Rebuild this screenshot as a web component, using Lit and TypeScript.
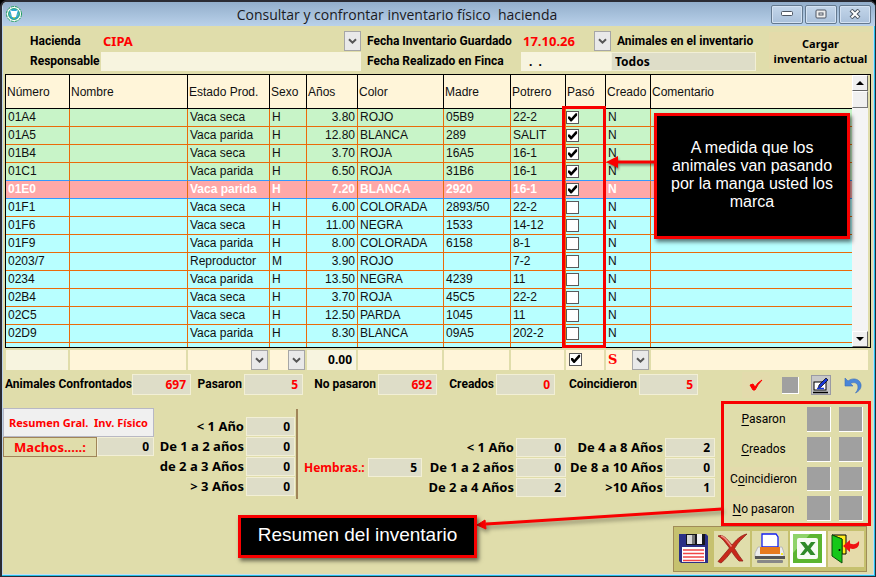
import { LitElement, html, css, svg, nothing } from "lit";
import { customElement, state } from "lit/decorators.js";
import { classMap } from "lit/directives/class-map.js";

interface Animal {
  numero: string;
  estado: string;
  sexo: string;
  anos: string;
  color: string;
  madre: string;
  potrero: string;
  paso: boolean;
}

const animal = (
  numero: string, estado: string, sexo: string, anos: string,
  color: string, madre: string, potrero: string, paso = false,
): Animal => ({ numero, estado, sexo, anos, color, madre, potrero, paso });

const ANIMALS: Animal[] = [
  animal("01A4", "Vaca seca", "H", "3.80", "ROJO", "05B9", "22-2", true),
  animal("01A5", "Vaca parida", "H", "12.80", "BLANCA", "289", "SALIT", true),
  animal("01B4", "Vaca seca", "H", "3.70", "ROJA", "16A5", "16-1", true),
  animal("01C1", "Vaca parida", "H", "6.50", "ROJA", "31B6", "16-1", true),
  animal("01E0", "Vaca parida", "H", "7.20", "BLANCA", "2920", "16-1", true),
  animal("01F1", "Vaca seca", "H", "6.00", "COLORADA", "2893/50", "22-2"),
  animal("01F6", "Vaca seca", "H", "11.00", "NEGRA", "1533", "14-12"),
  animal("01F9", "Vaca parida", "H", "8.00", "COLORADA", "6158", "8-1"),
  animal("0203/7", "Reproductor", "M", "3.90", "ROJO", "", "7-2"),
  animal("0234", "Vaca parida", "H", "13.50", "NEGRA", "4239", "11"),
  animal("02B4", "Vaca seca", "H", "3.70", "ROJA", "45C5", "22-2"),
  animal("02C5", "Vaca seca", "H", "12.50", "PARDA", "1045", "11"),
  animal("02D9", "Vaca parida", "H", "8.30", "BLANCA", "09A5", "202-2"),
];

const COLUMNS = ["Número", "Nombre", "Estado Prod.", "Sexo", "Años", "Color", "Madre", "Potrero", "Pasó", "Creado", "Comentario"];

const TOTALS: [string, string][] = [
  ["Animales Confrontados", "697"],
  ["Pasaron", "5"],
  ["No pasaron", "692"],
  ["Creados", "0"],
  ["Coincidieron", "5"],
];

const MALES: [string, string][] = [["< 1 Año", "0"], ["De 1 a 2 años", "0"], ["de 2 a 3 Años", "0"], ["> 3 Años", "0"]];
const FEMALES: [string, string][] = [["< 1 Año", "0"], ["De 1 a 2 años", "0"], ["De 2 a 4 Años", "2"]];
const FEMALES_OLD: [string, string][] = [["De 4 a 8 Años", "2"], ["De 8 a 10 Años", "0"], [">10 Años", "1"]];

/* text before the access key, the key, text after it */
const REPORTS: [string, string, string][] = [["", "P", "asaron"], ["", "C", "reados"], ["C", "o", "incidieron"], ["", "N", "o pasaron"]];

const controls = css`
  * { box-sizing: border-box; }
  button, input, select { font: inherit; color: inherit; margin: 0; padding: 0; border: 0; border-radius: 0; background: none; }
  button { cursor: pointer; }
  .tick {
    appearance: none; display: block; width: 13px; height: 13px;
    background: #fff; border: 1px solid #5a5a5a;
  }
  .tick::before { content: ""; display: block; width: 11px; height: 11px; }
  .tick:checked::before {
    background: #000;
    clip-path: polygon(9% 40%, 27% 40%, 38% 56%, 78% 12%, 92% 12%, 92% 32%, 42% 86%, 32% 86%, 9% 60%);
  }
`;

@customElement("combo-box")
export class ComboBox extends LitElement {
  static properties = { value: {}, label: {} };
  declare value: string;
  declare label: string;

  static styles = [controls, css`
    :host { display: grid; min-width: 0; }
    select, svg { grid-area: 1 / 1; }
    select { appearance: none; width: 100%; padding-left: 2px; outline: none; }
    svg { justify-self: end; width: 17px; height: 20px; pointer-events: none; }
  `];

  render() {
    return html`
      <select aria-label=${this.label}><option>${this.value ?? ""}</option></select>
      <svg viewBox="0 0 17 20" aria-hidden="true">
        <rect x=".5" y=".5" width="16" height="19" fill="#e9e9e9" stroke="#a6a6a6" />
        <path d="M5 8.2 8.5 11.7 12 8.2" fill="none" stroke="#555" stroke-width="2" />
      </svg>`;
  }
}

@customElement("animal-table")
export class AnimalTable extends LitElement {
  @state() private rows = ANIMALS;
  @state() private current = 4;

  static styles = [controls, css`
    :host { display: block; position: relative; font: 12px "Liberation Sans", sans-serif; color: #101010; }
    .frame { display: flex; border: 1px solid #000; background: #e0ddab; }
    .body { flex: 1; min-width: 0; background: #b8ffff; }
    table { width: 100%; table-layout: fixed; border-collapse: separate; border-spacing: 0; }
    .c-numero { width: 64px; } .c-nombre { width: 118px; } .c-estado { width: 82px; } .c-sexo { width: 37px; }
    .c-anos { width: 51px; } .c-color { width: 86px; } .c-madre { width: 67px; } .c-potrero { width: 55px; }
    .c-paso { width: 40px; } .c-creado { width: 45px; }
    th {
      height: 34px; padding: 0 1px; text-align: left; font-weight: 400; white-space: nowrap;
      background: #fff5d9; border-right: 1px solid #000; border-bottom: 1px solid #000;
    }
    tr { --line: #ea6a0a; }
    td {
      height: 18px; padding: 0 2px; line-height: 17px; white-space: nowrap;
      border-right: 1px solid #ea6a0a; border-bottom: 1px solid var(--line);
    }
    th:last-child, td:last-child { border-right: 0; }
    .done { background: #c8f4c8; }
    .before { --line: #3399ff; }
    .current { --line: #3399ff; background: #ffa8a8; color: #fff; font-weight: 700; }
    .num { text-align: right; }
    .check { padding: 0; }
    .rest td { height: 4px; border-bottom: 0; padding: 0; line-height: 0; }
    .scroll {
      width: 18px; padding-right: 2px; display: flex; flex-direction: column;
      background-clip: content-box; background-color: #f4f4f4;
    }
    .scroll button {
      height: 16px; background: #f0f0f0; border: 1px solid #fff; border-right-color: #666; border-bottom-color: #666;
      display: grid; place-items: center;
    }
    .thumb { height: 17px; background: #f0f0f0; border: 1px solid #fff; border-right-color: #777; border-bottom-color: #777; }
    .track { flex: 1; }
    .mark { position: absolute; left: 557px; top: 32px; width: 44px; bottom: 0; border: 3px solid #f80000; pointer-events: none; }
    .note {
      position: absolute; left: 649px; top: 39px; width: 196px; height: 126px; border: 3px solid #f80000; background: #000;
      color: #fff; font-size: 16px; line-height: 18px; text-align: center;
      display: grid; place-items: center; padding: 0 8px 3px; box-shadow: 2px 3px 4px #0008;
    }
    .note p { margin: 0; }
    .arrow { position: absolute; left: 601px; top: 80px; width: 50px; height: 16px; filter: drop-shadow(1px 2px 1px #0006); }
  `];

  private toggle(index: number) {
    this.current = index;
    this.rows = this.rows.map((r, i) => (i === index ? { ...r, paso: !r.paso } : r));
  }

  render() {
    return html`
      <div class="frame">
        <div class="body">
          <table>
            <colgroup>
              <col class="c-numero" /><col class="c-nombre" /><col class="c-estado" /><col class="c-sexo" />
              <col class="c-anos" /><col class="c-color" /><col class="c-madre" /><col class="c-potrero" />
              <col class="c-paso" /><col class="c-creado" /><col />
            </colgroup>
            <thead><tr>${COLUMNS.map((c) => html`<th scope="col">${c}</th>`)}</tr></thead>
            <tbody>
              ${this.rows.map((r, i) => html`
                <tr class=${classMap({ done: r.paso, current: i === this.current, before: i === this.current - 1 })}>
                  <td>${r.numero}</td><td></td><td>${r.estado}</td><td>${r.sexo}</td>
                  <td class="num">${r.anos}</td><td>${r.color}</td><td>${r.madre}</td><td>${r.potrero}</td>
                  <td class="check">
                    <input class="tick" type="checkbox" aria-label="Pasó ${r.numero}" .checked=${r.paso} @change=${() => this.toggle(i)} />
                  </td>
                  <td>N</td><td></td>
                </tr>`)}
              <tr class="rest" aria-hidden="true">${COLUMNS.map(() => html`<td></td>`)}</tr>
            </tbody>
          </table>
        </div>
        <div class="scroll">
          <button aria-label="Subir"><svg width="8" height="4" viewBox="0 0 8 4"><path d="M0 4 4 0 8 4z" /></svg></button>
          <div class="thumb"></div>
          <div class="track"></div>
          <button aria-label="Bajar"><svg width="8" height="4" viewBox="0 0 8 4"><path d="M0 0 4 4 8 0z" /></svg></button>
        </div>
      </div>
      <div class="mark"></div>
      <svg class="arrow" viewBox="0 0 50 16" aria-hidden="true"><path d="M0 8 12 2V6.500H50V9.500H12V14z" fill="#f80000" /></svg>
      <div class="note"><p>A medida que los animales van pasando por la manga usted los marca</p></div>`;
  }
}

const saveIcon = svg`
  <path d="M1 1H28L30 3V30H3L1 28z" fill="#2b2f86" />
  <rect x="8" y="1" width="19" height="11" fill="#16161c" /><rect x="9" y="2" width="5" height="9" fill="#d8d8d8" />
  <rect x="14" y="2" width="3" height="9" fill="#777" />
  <rect x="19" y="1" width="5" height="10" fill="#f2f2f2" /><rect x="4" y="14" width="23" height="15" fill="#fff" />
  <path d="M5 17H26M5 20.500H26M5 24H26M5 27.500H26" stroke="#f04545" stroke-width="1.300" />`;
const deleteIcon = svg`
  <path d="M2 3C7 1 10 5 16 12C20 7 25 2 31 1C27 5 22 9 18.500 15.500C21 20 24 24 27 28L23 28C20 25 18 22 15.500 18.500C12 23 9 27 5 30L2 28.500C6 24 10 19 13.500 15C9 9 6 5 2 3z" fill="#c8281c" stroke="#8e2219" stroke-width=".8" />
  <path d="M5 3C9 4 12 9 15.500 13.500" fill="none" stroke="#ee8d80" stroke-width="1.500" />`;
const printIcon = svg`
  <path d="M4 14H28L30 20V25H1V20z" fill="#ececec" stroke="#b9b9b9" />
  <path d="M8 1H22L24 4V14H8z" fill="#fff" stroke="#1420f0" stroke-width="1.300" />
  <rect x="6" y="14" width="20" height="7" fill="#e87a1c" />
  <rect x="1" y="23" width="30" height="3" fill="#555" /><rect x="3" y="27" width="26" height="3" rx="1" fill="#888" />
  <rect x="27" y="20" width="2" height="2" fill="#f6ee28" />`;
const excelIcon = svg`
  <rect x="1" y="1" width="29" height="29" fill="#5cb531" /><path d="M1 1H18L1 20z" fill="#8fd36a" />
  <rect x="5" y="5" width="21" height="21" rx="2" fill="#f6fbf4" />
  <path d="M8 9H13L16 13 19 9H23.500L18.500 15.500 23.500 22H18.500L15.500 18 12 22H8L13 15.500z" fill="#2f8a2a" />`;
const exitIcon = svg`
  <path d="M2 2H16V21H12V6z" fill="#ffee1c" stroke="#000" />
  <path d="M2 2 12 6V30L2 23z" fill="#16c818" stroke="#0a4f0a" /><circle cx="9.500" cy="17" r="1" fill="#000" />
  <path d="M13 13 20 7V10.500C24 12 27 11 29 8C30 14 26 17 20 15.500V19z" fill="#f01212" />`;

const ACTIONS: [string, string, unknown][] = [
  ["Guardar", "save", saveIcon], ["Eliminar", "delete", deleteIcon], ["Imprimir", "print", printIcon],
  ["Excel", "excel", excelIcon], ["Salir", "exit", exitIcon],
];

@customElement("app-root")
export class AppRoot extends LitElement {
  static styles = [controls, css`
    :host { display: block; font: 700 12px "Roboto", sans-serif; color: #000; background: #000; }
    .window {
      min-height: 100vh; display: flex; flex-direction: column; background: #e0ddab;
      border: solid #2b2b33; border-width: 2px 1px 1px 2px; border-radius: 7px 7px 0 0;
      box-shadow: inset -1px -1px #22c2e8, inset -2px -2px #c6dcf0, inset 1px 0 #bcd2ea; padding: 0 3px 3px 1px; overflow: hidden;
    }
    .title {
      margin-right: -3px; height: 24px; display: grid; grid-template-columns: auto 1fr auto; align-items: center;
      background: linear-gradient(#93aecb, #b9d1ea); padding: 0 4px 0 2px;
    }
    .title h1 { margin: 0; text-align: center; font: 400 14px "Open Sans", sans-serif; white-space: pre; color: #1a1a22; }
    .system { justify-self: end; display: flex; gap: 2px; }
    .system button {
      width: 32px; height: 19px; border: 1px solid #64798f; border-radius: 2px; background: linear-gradient(#c4d6ea, #a9c0da);
      display: grid; place-items: center; box-shadow: inset 0 0 0 1px #d4e2f2;
    }
    .head {
      display: grid; grid-template-columns: 98px minmax(180px, 1fr) 160px 90px 145px 13px 103px; grid-template-rows: 21px 20px;
      align-items: center; padding: 4px 0 3px;
    }
    .head label { white-space: nowrap; }
    .caption { padding-left: 27px; }
    .caption2 { padding-left: 6px; }
    combo-box { color: #f00; font: 700 13px "Noto Sans", sans-serif; }
    .field { width: 100%; height: 19px; background: #f7f4df; padding: 0 8px; font: 700 12px "Noto Sans", sans-serif; }
    .readonly { background: #deddc8; border: 1px solid #f2efd6; }
    .todos { padding: 0 3px; }
    .load { grid-area: 1 / 7 / 3 / 8; height: 37px; background: #e5dbaa; font: 700 11px/15px "Noto Sans", sans-serif; white-space: nowrap; }
    animal-table { margin: 0 1px 0 2px; }
    .filters {
      display: grid; grid-template-columns: 64px 118px 82px 37px 51px 86px 67px 55px 40px 45px 1fr;
      margin: 1px 2px 0 3px; height: 21px; align-items: center;
    }
    .filters > * { margin-right: 2px; min-width: 0; }
    .filters .text { width: auto; height: 20px; background: #fff5d9; text-align: right; padding: 0 4px; font: 700 12px "Noto Sans", sans-serif; }
    .filters .pale { background: #f7f4df; }
    .filters combo-box, .flag { background: #fff5d9; }
    .filters combo-box { font-family: "DejaVu Serif", serif; }
    .flag { height: 20px; padding: 3px; }
    .totals { display: flex; align-items: center; height: 30px; padding-left: 2px; }
    .counts { display: grid; grid-template-columns: 127px 59px 53px 59px 75px 59px 59px 59px 84px 59px; align-items: center; padding-bottom: 2px; }
    .counts label { text-align: right; white-space: nowrap; padding-right: 2px; }
    .counts input { height: 21px; color: #f00; }
    input.value { text-align: right; padding: 0 4px; font: 700 12px "Noto Sans", sans-serif; width: 100%; }
    .tools { margin-left: auto; display: flex; align-items: center; gap: 12px; padding-right: 9px; }
    .tools button { display: grid; place-items: center; width: 20px; height: 20px; }
    .tools .confirm { width: 28px; height: 26px; background: #e3dbac; }
    .tools .edit { background: #c8c8c8; border: 1px solid #9a9aa4; }
    .swatch { background: #a0a0a0; border: solid #fff; border-width: 0 1px 1px 0; }
    .tools .swatch { width: 17px; height: 17px; }
    .lower { display: flex; align-items: flex-start; padding-top: 1px; }
    .summary { flex: 1; display: flex; align-items: flex-start; font: 700 13px "Noto Sans", sans-serif; }
    .males { width: 151px; padding-top: 7px; color: #f00; }
    .males button { width: 100%; height: 29px; background: #f0f0f0; border: 1px solid #b8b8c4; font-size: 11px; white-space: pre; }
    .males .line { display: flex; height: 20px; }
    .males label { width: 94px; border: 1px solid #a08458; text-align: center; line-height: 18px; }
    .males input { flex: 1; min-width: 0; color: #000; height: 19px; }
    .ages { display: grid; align-items: center; row-gap: 1px; }
    .ages label { text-align: right; white-space: nowrap; padding-right: 2px; line-height: 19px; }
    .ages.male { grid-template-columns: 92px 49px; margin-top: 16px; }
    .rule { width: 2px; height: 90px; margin: 8px 6px 0 1px; background: #a08458; }
    .hembras { display: grid; grid-template-columns: 64px 54px; align-items: center; margin-top: 57px; color: #f00; }
    .hembras label { font-size: 12px; }
    .hembras input { color: #000; }
    .ages.female { grid-template-columns: 94px 50px; margin-top: 37px; }
    .ages.old { grid-template-columns: 99px 50px; margin-top: 37px; }
    .side { width: 150px; position: relative; margin-right: 1px; }
    .reports {
      border: 3px solid #f80000; height: 125px; padding: 3px 5px 2px 4px;
      display: grid; grid-template-columns: 1fr 24px 24px; column-gap: 8px; row-gap: 5px;
    }
    .reports button { font: 400 12px "Roboto", sans-serif; white-space: nowrap; }
    .reports .named { background: #e3dbac; }
    .plain { background: none; }
    u { text-underline-offset: 2px; }
    .actions {
      position: relative; width: 194px; height: 46px; margin-left: -48px; display: flex; gap: 2px; padding: 4px 2px;
      background: #c6c16f; border: 1px solid #a08c58;
    }
    .actions button { width: 36px; height: 36px; background: #e0ddab; display: grid; place-items: center; }
    .actions .save { background: none; }
    .actions .excel { background: #fff; }
    .actions .exit { background: #e5dbaa; }
    .note {
      position: absolute; right: 394px; top: 114px; width: 239px; height: 43px;
      background: #000; border: 3px solid #f80000; color: #fff; display: grid; place-items: center;
      font: 400 19px "Liberation Sans", sans-serif; box-shadow: 2px 3px 4px #0008; padding-bottom: 3px;
    }
    .arrow { position: absolute; right: 149px; top: 99px; width: 246px; height: 32px; filter: drop-shadow(2px 3px 2px #0006); }
  `];

  private box(id: string, value: string) {
    return html`<input id=${id} class="field readonly value" readonly .value=${value} />`;
  }

  private ages(kind: string, rows: [string, string][]) {
    return html`<div class="ages ${kind}">
      ${rows.map(([name, n], i) => html`<label for="${kind}-${i}">${name}</label>${this.box(`${kind}-${i}`, n)}`)}
    </div>`;
  }

  render() {
    return html`
      <main class="window">
        <header class="title">
          <svg width="18" height="18" viewBox="0 0 18 18" aria-hidden="true">
            <circle cx="9" cy="9" r="7.500" fill="#fff" stroke="#1c9c5a" stroke-width="1" stroke-dasharray="3 1" />
            <circle cx="9" cy="9" r="5.500" fill="#2fa8d8" stroke="#1c9c5a" stroke-width=".8" /><path d="M4 8A5.500 5.500 0 0 0 14 8L9 13.500z" fill="#e8e020" />
            <path d="M5 5 7 6H11L13 5 12 8 11 12H7L6 8z" fill="#fff" />
          </svg>
          <h1>Consultar y confrontar inventario físico  hacienda</h1>
          <div class="system">
            <button aria-label="Minimizar"><svg width="12" height="6"><rect x=".5" y=".5" width="11" height="4" rx="1" fill="#fff" stroke="#4c5562" /></svg></button>
            <button aria-label="Maximizar"><svg width="12" height="10"><rect x="1" y="1" width="10" height="8" rx="1" fill="#eee" stroke="#4c5562" /><rect x="4" y="4" width="4" height="2" fill="#fff" stroke="#4c5562" /></svg></button>
            <button aria-label="Cerrar"><svg width="12" height="10" viewBox="0 0 12 10"><path d="M2 1 10 9M10 1 2 9" stroke="#4c5562" stroke-width="4" /><path d="M2.500 1.500 9.500 8.500M9.500 1.500 2.500 8.500" stroke="#fff" stroke-width="2" /></svg></button>
          </div>
        </header>

        <section class="head">
          <label class="caption">Hacienda</label>
          <combo-box label="Hacienda" value="CIPA"></combo-box>
          <label class="caption2">Fecha Inventario Guardado</label>
          <combo-box label="Fecha Inventario Guardado" value="17.10.26"></combo-box>
          <label class="caption2" for="todos">Animales en el inventario</label>
          <span></span>
          <button class="load">Cargar<br />inventario actual</button>
          <label class="caption" for="responsable">Responsable</label>
          <input id="responsable" class="field" />
          <label class="caption2" for="realizado">Fecha Realizado en Finca</label>
          <input id="realizado" class="field" .value=${".  ."} />
          <input id="todos" class="field readonly todos" readonly .value=${"Todos"} />
        </section>

        <animal-table></animal-table>

        <section class="filters">
          <input class="text pale" aria-label="Filtrar número" />
          <input class="text" aria-label="Filtrar nombre" />
          <combo-box label="Filtrar estado"></combo-box>
          <combo-box label="Filtrar sexo"></combo-box>
          <input class="text pale" aria-label="Filtrar años" .value=${"0.00"} />
          <input class="text" aria-label="Filtrar color" />
          <input class="text" aria-label="Filtrar madre" />
          <input class="text" aria-label="Filtrar potrero" />
          <div class="flag"><input class="tick" type="checkbox" aria-label="Filtrar pasó" checked /></div>
          <combo-box label="Filtrar creado" value="S"></combo-box>
          <input class="text" aria-label="Filtrar comentario" />
        </section>

        <section class="totals">
          <div class="counts">
            ${TOTALS.map(([name, n], i) => html`<label for="total-${i}">${name}</label>${this.box(`total-${i}`, n)}`)}
          </div>
          <div class="tools">
            <button class="confirm" aria-label="Confirmar"><svg width="14" height="12" viewBox="0 0 14 12"><path d="M1 6 4 5 6 8Q9 3 13 1Q9 5 6 11H4z" fill="#f00" stroke="#f00" /></svg></button>
            <button class="swatch" aria-label="Color"></button>
            <button class="edit" aria-label="Editar">
              <svg width="18" height="18" viewBox="0 0 18 18"><rect x="2" y="6" width="12" height="8" fill="#fff" stroke="#000" /><path d="M1 16.500H16" stroke="#000" stroke-width="1.500" /><path d="M6 13 7 9 14 2 16 4 9 11z" fill="#1838d8" stroke="#000" stroke-width=".7" /><path d="M5 12.500H12" stroke="#1838d8" stroke-width="1.500" /></svg>
            </button>
            <button aria-label="Deshacer"><svg width="18" height="18" viewBox="0 0 18 18"><path d="M1 2V10H9L6.500 7.500C10 5.500 14 7 14 11C14 13.500 13 15 11.500 17C15.500 15 17.500 12 17 8.500C16 3 9 1 4 5z" fill="#4a86d8" stroke="#3a6cb8" stroke-width=".6" /></svg></button>
          </div>
        </section>

        <section class="lower">
          <div class="summary">
            <div class="males">
              <button>Resumen Gral.  Inv. Físico</button>
              <div class="line"><label for="machos">Machos.....:</label>${this.box("machos", "0")}</div>
            </div>
            ${this.ages("male", MALES)}
            <div class="rule"></div>
            <div class="hembras"><label for="hembras">Hembras.:</label>${this.box("hembras", "5")}</div>
            ${this.ages("female", FEMALES)}
            ${this.ages("old", FEMALES_OLD)}
          </div>
          <div class="side">
            <div class="reports">
              ${REPORTS.map(([a, key, b], i) => html`
                <button class=${i > 1 ? "named" : "plain"}>${a || nothing}<u>${key}</u>${b}</button>
                <button class="swatch" aria-label="Color de fondo"></button>
                <button class="swatch" aria-label="Color de texto"></button>`)}
            </div>
            <div class="actions">
              ${ACTIONS.map(([name, cls, icon]) => html`<button class=${cls} aria-label=${name}><svg width="32" height="32" viewBox="0 0 32 32">${icon}</svg></button>`)}
            </div>
            <svg class="arrow" viewBox="0 0 246 32" aria-hidden="true"><path d="M246 9 10 24" stroke="#f80000" stroke-width="3" /><path d="M1 25 9 20 10 29z" fill="#f80000" stroke="#f80000" /></svg>
            <div class="note">Resumen del inventario</div>
          </div>
        </section>
      </main>`;
  }
}
